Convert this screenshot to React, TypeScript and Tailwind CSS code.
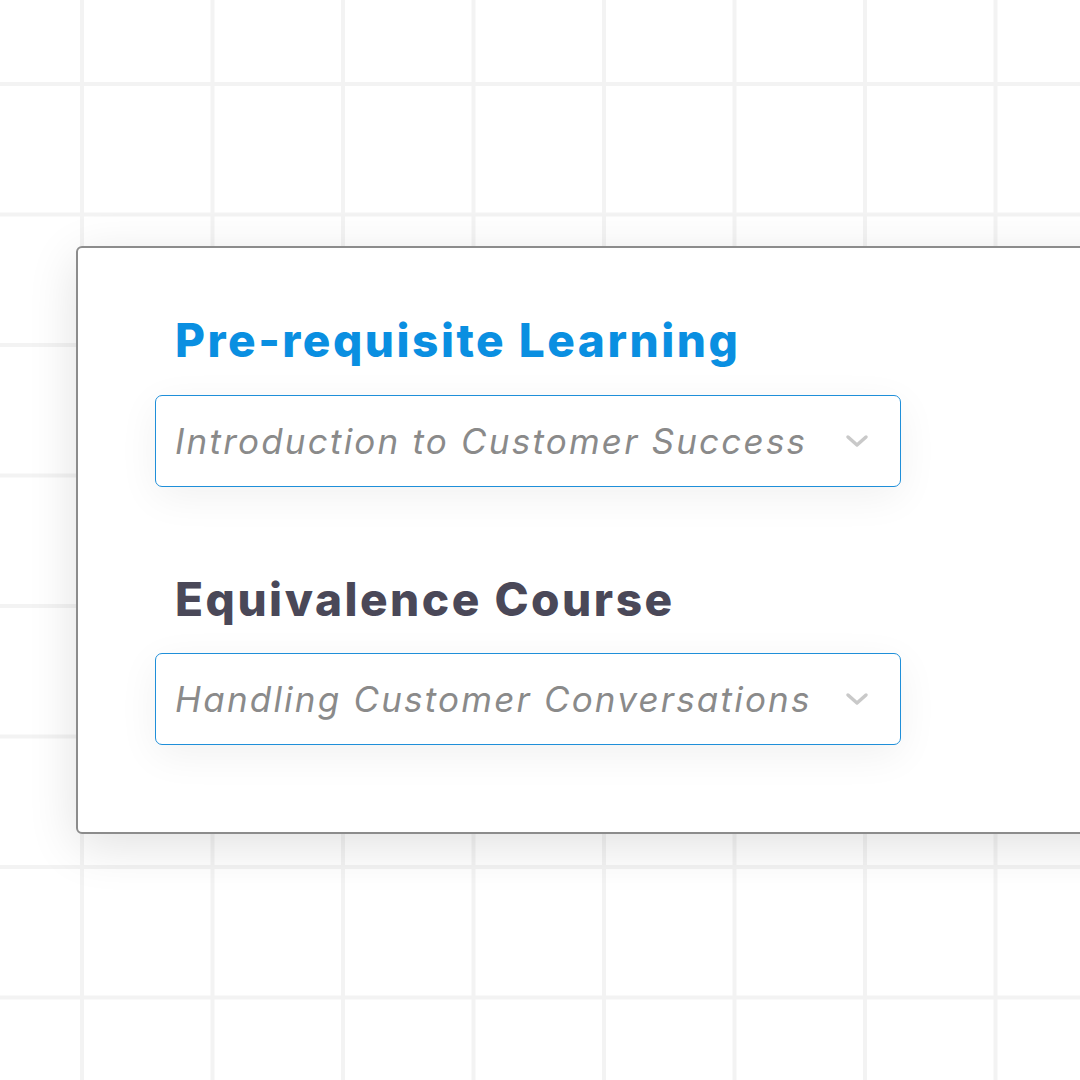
function Chevron() {
  return (
    <svg width="24" height="14" viewBox="0 0 24 14" fill="none" className="mr-[1px]">
      <path d="M3 3L12 11L21 3" stroke="#c9c9c9" strokeWidth="3.5" strokeLinecap="round" strokeLinejoin="round" />
    </svg>
  )
}

function SelectBox({ value }: { value: string }) {
  return (
    <div className="flex h-[92px] w-[746px] items-center justify-between rounded-[7px] border border-[#1f8fd9] bg-white pl-[19px] pr-[30px] shadow-[0_10px_40px_rgba(0,0,0,0.06)]">
      <span className="text-[35px] italic tracking-[2.2px] text-[#8a8a8a]">{value}</span>
      <Chevron />
    </div>
  )
}

export default function App() {
  return (
    <div className="relative h-[1080px] w-[1080px] overflow-hidden bg-white bg-[linear-gradient(to_right,#f3f3f3_3.5px,transparent_3.5px),linear-gradient(to_bottom,#f3f3f3_3.5px,transparent_3.5px)] bg-[size:130.5px_130.5px] bg-[position:80px_82px] font-['Inter',sans-serif]">
      <div className="pl-[76px] pt-[246px]">
        <div className="h-[588px] w-[1100px] rounded-[6px] border-2 border-[#8c8c8c] bg-white shadow-[0_12px_50px_rgba(0,0,0,0.12)]">
          <div className="flex flex-col pl-[77px] pt-[64px]">
            <h2 className="pl-[20px] text-[46px] font-extrabold leading-[56px] tracking-[2.5px] text-[#0a8fe1]">
              Pre-requisite Learning
            </h2>
            <div className="mt-[27px]">
              <SelectBox value="Introduction to Customer Success" />
            </div>
            <h2 className="mt-[84px] pl-[20px] text-[46px] font-extrabold leading-[56px] tracking-[2.5px] text-[#4a4858]">
              Equivalence Course
            </h2>
            <div className="mt-[26px]">
              <SelectBox value="Handling Customer Conversations" />
            </div>
          </div>
        </div>
      </div>
    </div>
  )
}
